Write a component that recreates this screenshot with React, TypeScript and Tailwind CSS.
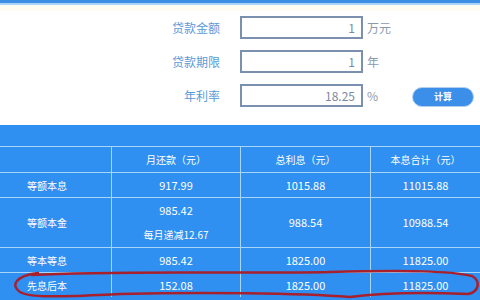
const FONT = { fontFamily: '"Noto Sans CJK SC", "Noto Sans", sans-serif' };

const FIELDS = [
  { label: "贷款金额", value: "1", unit: "万元" },
  { label: "贷款期限", value: "1", unit: "年" },
  { label: "年利率", value: "18.25", unit: "%" },
];

const HEADERS = ["", "月还款（元）", "总利息（元）", "本息合计（元）"];

const ROWS = [
  { name: "等额本息", monthly: ["917.99"], interest: "1015.88", total: "11015.88" },
  { name: "等额本金", monthly: ["985.42", "每月递减12.67"], interest: "988.54", total: "10988.54" },
  { name: "等本等息", monthly: ["985.42"], interest: "1825.00", total: "11825.00" },
  { name: "先息后本", monthly: ["152.08"], interest: "1825.00", total: "11825.00" },
];

const COLS = "grid grid-cols-[111px_129px_130px_110px]";

function FormRow({ label, value, unit, last }: { label: string; value: string; unit: string; last?: boolean }) {
  return (
    <div className="flex items-center h-[23px]">
      <div className="w-[220px] text-right text-[12px] text-[#5b9ad8]">{label}</div>
      <div className="ml-[20px] w-[123px] h-[23px] border-2 border-[#7b8fae] bg-white flex items-center justify-end pr-[6px] text-[12px] text-[#7a8aa2]">
        {value}
      </div>
      <div className="ml-[4px] w-[32px] text-[12px] text-[#8c99ab]">{unit}</div>
      {last && (
        <button className="ml-[13px] mt-[3px] w-[62px] h-[20px] rounded-full bg-[#3b8fe9] border border-[#b3d0f0] text-white text-[9px] font-bold">
          计算
        </button>
      )}
    </div>
  );
}

export default function App() {
  return (
    <div className="relative w-[480px] h-[300px] overflow-hidden bg-white" style={FONT}>
      <div className="h-[3px] bg-[#3d8fe6]" />
      <div className="h-[2px] bg-[#a9d4f7]" />
      <div className="h-[6px] bg-[#fdfdf2]" />

      <div className="h-[114px] pt-[5px] flex flex-col gap-[11px]">
        {FIELDS.map((f, i) => (
          <FormRow key={f.label} {...f} last={i === FIELDS.length - 1} />
        ))}
      </div>

      <div className="h-[175px] bg-[#2f90f1] pt-[21px] text-white">
        <div className={`${COLS} h-[26px] border-t border-[#a8d6f7] text-[10px]`}>
          {HEADERS.map((h, i) => (
            <div key={i} className={`flex items-center justify-center ${i > 0 ? "border-l border-[#a8d6f7]" : ""}`}>{h}</div>
          ))}
        </div>
        {ROWS.map((r) => (
          <div key={r.name} className={`${COLS} border-t border-[#a8d6f7] ${r.monthly.length > 1 ? "h-[50px]" : "h-[25px]"}`}>
            <div className="flex items-center pl-[27px] text-[10px]">{r.name}</div>
            <div className="flex flex-col items-center justify-center gap-[9px] border-l border-[#a8d6f7] text-[11px] leading-[15px]">
              {r.monthly.map((m) => <div key={m} className={m.length > 7 ? "text-[10px]" : ""}>{m}</div>)}
            </div>
            <div className="flex items-center justify-center border-l border-[#a8d6f7] text-[11px]">{r.interest}</div>
            <div className="flex items-center justify-center border-l border-[#a8d6f7] text-[11px]">{r.total}</div>
          </div>
        ))}
      </div>

      {/* hand-drawn red loop around the last row */}
      <svg className="absolute left-0 top-0 pointer-events-none" width="480" height="300" viewBox="0 0 480 300">
        <path
          d="M 32 275 C 120 270, 250 274, 330 272 S 450 271, 472 276 C 481 281, 479 292, 468 294 C 420 292, 380 293, 350 297 C 300 293, 200 292, 120 294 C 70 296, 32 299, 20 292 C 11 286, 14 276, 38 273"
          fill="none"
          stroke="#a8202c"
          strokeWidth="2.5"
          strokeLinecap="round"
        />
      </svg>
    </div>
  );
}
